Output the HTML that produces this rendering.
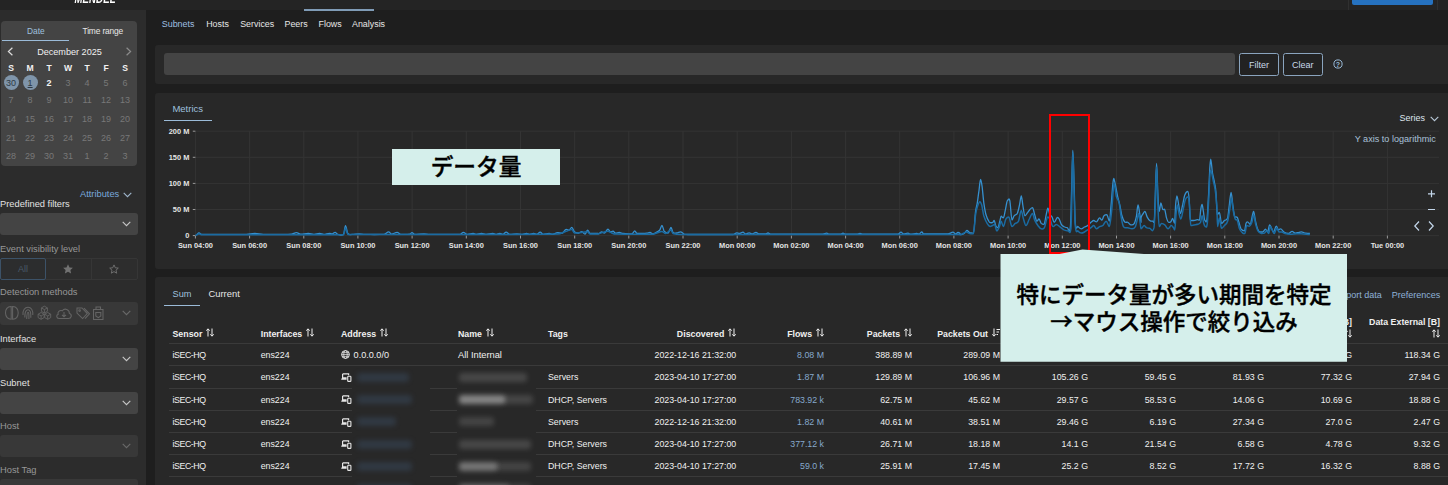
<!DOCTYPE html>
<html lang="ja"><head><meta charset="utf-8"><title>Subnets</title>
<style>
html,body{margin:0;padding:0;}
body{width:1448px;height:485px;overflow:hidden;position:relative;background:#1e1e1e;font-family:"Liberation Sans","Noto Sans CJK JP",sans-serif;font-size:9px;color:#e6e6e6;}
div,span,svg{position:absolute;box-sizing:border-box;}
.topbar{left:0;top:0;width:1448px;height:10px;background:#242424;}
.sidebar{left:0;top:10px;width:146px;height:475px;background:#2c2c2c;}
.panel{background:#282828;border-radius:3px;}
.cal{left:1px;top:20.5px;width:135.5px;height:145px;background:#444444;border-radius:4px;}
.cd{width:18px;height:14px;line-height:14px;text-align:center;font-size:9px;color:#787878;}
.cd.ch{color:#f2f2f2;font-weight:bold;font-size:8.6px;}
.cd.act{color:#f4f4f4;font-weight:bold;}
.cd.sel{color:#2e3a46;}
.cd.sel::before{content:"";position:absolute;left:1.5px;top:-0.5px;width:15px;height:15px;border-radius:50%;background:#7f95aa;z-index:-1;}
.cd.sel{z-index:1;}
.cd.today{text-decoration:underline;}
.lbl{left:0;white-space:nowrap;font-size:9.3px;line-height:12px;color:#e2e2e2;}
.lbl.dim{color:#979797;}
.sel-box{left:0;width:137.5px;height:21.5px;background:#444444;border-radius:3px;color:#c8c8c8;}
.sel-box.dim{background:#383838;color:#6a6a6a;}
.chev{position:absolute;}
.sel-box .chev{left:122px;top:7.6px;}
.nav span{top:17.6px;font-size:8.9px;line-height:12px;white-space:nowrap;color:#e6e6e6;}
.btn{top:53px;height:22.5px;border:1px solid #8aa4be;border-radius:2.5px;color:#c9d9ea;font-size:9px;line-height:22.6px;text-align:center;background:#222;}
.tab{font-size:9.2px;line-height:12px;white-space:nowrap;}
.axl text{font-family:"Liberation Sans",sans-serif;font-weight:bold;font-size:7.4px;fill:#e4e4e4;}
.th{white-space:nowrap;font-weight:bold;font-size:8.8px;line-height:12px;color:#f0f0f0;}
.td{white-space:nowrap;font-size:8.8px;line-height:14px;color:#f0f0f0;}
.td.fl{color:#86a9cc;}
.srt{position:relative;display:inline-block;vertical-align:-0.5px;margin-left:1.5px;}
.hr{left:168.5px;width:1280px;height:1px;background:#3a3a3a;}
.blur{filter:blur(2.9px);border-radius:3px;}
.cjk{position:static;font-family:"Noto Sans CJK JP",sans-serif;}
.note{background:#d5efeb;color:#000;font-weight:500;-webkit-text-stroke:0.4px #000;text-align:center;white-space:nowrap;font-family:"Liberation Sans","Noto Sans CJK JP",sans-serif;}
</style></head><body>
<div class="topbar"></div>
<span style="left:74.5px;top:-4.9px;font-size:9.6px;line-height:12px;font-weight:bold;font-style:italic;color:#fff;letter-spacing:0.1px;transform:scaleY(1.25);transform-origin:0 100%">MENDEL</span>
<div style="left:304px;top:9.4px;width:70px;height:1.7px;background:#7f9bb6"></div>
<div style="left:1348px;top:0;width:1px;height:10px;background:#303030"></div>
<div style="left:1437px;top:0;width:1px;height:10px;background:#303030"></div>
<div style="left:1352px;top:0;width:80.5px;height:4.8px;background:#2672c0;border-radius:0 0 2px 2px"></div>

<div class="sidebar"></div>
<div class="cal"></div>
<span class="tab" style="left:27px;top:24.6px;color:#9fc0df;font-size:8.4px">Date</span>
<span class="tab" style="left:82.5px;top:24.6px;color:#e8e8e8;font-size:8.4px;letter-spacing:-0.15px">Time range</span>
<div style="left:2px;top:39.8px;width:67px;height:1.2px;background:#9bbbd8"></div>
<svg style="left:7px;top:46.6px" width="7" height="9" viewBox="0 0 7 9"><path d="M5.4 0.7L1.4 4.5L5.4 8.3" fill="none" stroke="#dcdcdc" stroke-width="1.2"/></svg>
<svg style="left:124.5px;top:46.6px" width="7" height="9" viewBox="0 0 7 9"><path d="M1.6 0.7L5.6 4.5L1.6 8.3" fill="none" stroke="#8c8c8c" stroke-width="1.2"/></svg>
<span style="left:1.5px;top:45.5px;width:136px;text-align:center;font-size:9.1px;line-height:13px;color:#f0f0f0">December 2025</span>
<span class="cd ch" style="left:2.1px;top:60.9px">S</span>
<span class="cd ch" style="left:21.1px;top:60.9px">M</span>
<span class="cd ch" style="left:40.1px;top:60.9px">T</span>
<span class="cd ch" style="left:59.1px;top:60.9px">W</span>
<span class="cd ch" style="left:78.1px;top:60.9px">T</span>
<span class="cd ch" style="left:97.1px;top:60.9px">F</span>
<span class="cd ch" style="left:116.1px;top:60.9px">S</span>
<span class="cd sel" style="left:2.1px;top:75.7px">30</span>
<span class="cd sel today" style="left:21.1px;top:75.7px">1</span>
<span class="cd act" style="left:40.1px;top:75.7px">2</span>
<span class="cd" style="left:59.1px;top:75.7px">3</span>
<span class="cd" style="left:78.1px;top:75.7px">4</span>
<span class="cd" style="left:97.1px;top:75.7px">5</span>
<span class="cd" style="left:116.1px;top:75.7px">6</span>
<span class="cd" style="left:2.1px;top:93.3px">7</span>
<span class="cd" style="left:21.1px;top:93.3px">8</span>
<span class="cd" style="left:40.1px;top:93.3px">9</span>
<span class="cd" style="left:59.1px;top:93.3px">10</span>
<span class="cd" style="left:78.1px;top:93.3px">11</span>
<span class="cd" style="left:97.1px;top:93.3px">12</span>
<span class="cd" style="left:116.1px;top:93.3px">13</span>
<span class="cd" style="left:2.1px;top:112.0px">14</span>
<span class="cd" style="left:21.1px;top:112.0px">15</span>
<span class="cd" style="left:40.1px;top:112.0px">16</span>
<span class="cd" style="left:59.1px;top:112.0px">17</span>
<span class="cd" style="left:78.1px;top:112.0px">18</span>
<span class="cd" style="left:97.1px;top:112.0px">19</span>
<span class="cd" style="left:116.1px;top:112.0px">20</span>
<span class="cd" style="left:2.1px;top:130.6px">21</span>
<span class="cd" style="left:21.1px;top:130.6px">22</span>
<span class="cd" style="left:40.1px;top:130.6px">23</span>
<span class="cd" style="left:59.1px;top:130.6px">24</span>
<span class="cd" style="left:78.1px;top:130.6px">25</span>
<span class="cd" style="left:97.1px;top:130.6px">26</span>
<span class="cd" style="left:116.1px;top:130.6px">27</span>
<span class="cd" style="left:2.1px;top:149.0px">28</span>
<span class="cd" style="left:21.1px;top:149.0px">29</span>
<span class="cd" style="left:40.1px;top:149.0px">30</span>
<span class="cd" style="left:59.1px;top:149.0px">31</span>
<span class="cd" style="left:78.1px;top:149.0px">1</span>
<span class="cd" style="left:97.1px;top:149.0px">2</span>
<span class="cd" style="left:116.1px;top:149.0px">3</span>

<span class="tab" style="left:80px;top:188.2px;color:#79a9dc;font-size:9.3px">Attributes</span>
<svg class="chev" style="left:123px;top:191.5px;color:#9fb6cc" width="9" height="6" viewBox="0 0 9 6"><path d="M0.7 0.8L4.5 4.6L8.3 0.8" fill="none" stroke="currentColor" stroke-width="1.1"/></svg>
<span class="lbl" style="top:197.8px">Predefined filters</span>
<div class="sel-box" style="top:213px"><svg class="chev" width="9" height="6" viewBox="0 0 9 6"><path d="M0.7 0.8L4.5 4.6L8.3 0.8" fill="none" stroke="currentColor" stroke-width="1.1"/></svg></div>
<span class="lbl dim" style="top:243px">Event visibility level</span>
<div style="left:0;top:258px;width:137.5px;height:21.8px;background:#2d2d2d;border:1px solid #363636;border-radius:2px"></div>
<div style="left:0;top:258px;width:46px;height:21.8px;border:1px solid #3c5268;border-radius:2px;background:#2c2d2e"></div>
<div style="left:91px;top:258.5px;width:1px;height:20.8px;background:#363636"></div>
<span style="left:0;top:263.3px;width:46px;text-align:center;font-size:9px;line-height:12px;color:#4a5a6a">All</span>
<svg style="left:63.3px;top:264.3px" width="10" height="10" viewBox="0 0 10 10"><path d="M5 0.2L6.5 3.4L9.9 3.8L7.4 6.1L8.1 9.6L5 7.8L1.9 9.6L2.6 6.1L0.1 3.8L3.5 3.4Z" fill="#727272"/></svg>
<svg style="left:109.2px;top:264.3px" width="10" height="10" viewBox="0 0 10 10"><path d="M5 0.9L6.3 3.8L9.3 4.1L7 6.2L7.7 9.2L5 7.6L2.3 9.2L3 6.2L0.7 4.1L3.7 3.8Z" fill="none" stroke="#747474" stroke-width="0.9"/></svg>
<span class="lbl dim" style="top:286.3px">Detection methods</span>
<div class="sel-box dim" style="top:301.5px;height:23px"><svg class="chev" style="top:8.4px" width="9" height="6" viewBox="0 0 9 6"><path d="M0.7 0.8L4.5 4.6L8.3 0.8" fill="none" stroke="currentColor" stroke-width="1.1"/></svg></div>
<svg style="left:4px;top:305px" width="102" height="16" viewBox="0 0 102 16" fill="none" stroke="#646464" stroke-width="1.05">
<path d="M7.2 1.5C3.5 1.2 1.2 4.5 1.5 8C1.6 11.8 4 14.3 7.2 14.2ZM8.6 1.5C12.2 1.2 14.4 4.5 14.2 8C14 11.8 11.8 14.3 8.6 14.2Z"/>
<path d="M19 10C18.5 5 21 2.2 24 2.2C27 2.2 29.2 5 28.8 10M20.8 12.5C20.8 8 21.5 4.8 24 4.8C26.5 4.8 27 8 26.8 12.8M22.7 14C22.9 10 23 7.2 24 7.2C25 7.2 25 10 24.9 14"/>
<path d="M40.4 1.1999999999999997L43.4 2.8999999999999995V6.3L40.4 8.0L37.4 6.3V2.8999999999999995ZM37.4 2.8999999999999995L40.4 4.6L43.4 2.8999999999999995M40.4 4.6V8.0M37.1 7.5L40.1 9.200000000000001V12.6L37.1 14.3L34.1 12.6V9.200000000000001ZM34.1 9.200000000000001L37.1 10.9L40.1 9.200000000000001M37.1 10.9V14.3M43.7 7.5L46.7 9.200000000000001V12.6L43.7 14.3L40.7 12.6V9.200000000000001ZM40.7 9.200000000000001L43.7 10.9L46.7 9.200000000000001M43.7 10.9V14.3" stroke-width="0.9"/>
<path d="M55 13.5H64.5C67.5 13.5 68.5 9.5 65.3 8.2C65.6 4.5 60.5 2.6 58.4 5.8C55.5 4.8 53.2 7.2 54.2 9.3C52 10 52.3 13.4 55 13.5ZM60 7V11.6M58 9.8L60 11.8L62 9.8"/>
<path d="M73 3H78L83.3 8.6L78.6 13.5L73 8ZM80 3.2L85.5 8.8L81 13.6"/><circle cx="75.6" cy="5.6" r="0.8"/>
<path d="M89.5 4.5H99V14.5H89.5ZM92 4.5V2H96.5V4.5M91.8 7.5H96.8V11L94.3 12.6L91.8 11Z"/>
</svg>
<span class="lbl" style="top:333px">Interface</span>
<div class="sel-box" style="top:348.2px"><svg class="chev" width="9" height="6" viewBox="0 0 9 6"><path d="M0.7 0.8L4.5 4.6L8.3 0.8" fill="none" stroke="currentColor" stroke-width="1.1"/></svg></div>
<span class="lbl" style="top:376.7px">Subnet</span>
<div class="sel-box" style="top:392px"><svg class="chev" width="9" height="6" viewBox="0 0 9 6"><path d="M0.7 0.8L4.5 4.6L8.3 0.8" fill="none" stroke="currentColor" stroke-width="1.1"/></svg></div>
<span class="lbl dim" style="top:420.2px">Host</span>
<div class="sel-box dim" style="top:435.3px"><svg class="chev" width="9" height="6" viewBox="0 0 9 6"><path d="M0.7 0.8L4.5 4.6L8.3 0.8" fill="none" stroke="currentColor" stroke-width="1.1"/></svg></div>
<span class="lbl dim" style="top:463.8px">Host Tag</span>
<div class="sel-box dim" style="top:479px"><svg class="chev" width="9" height="6" viewBox="0 0 9 6"><path d="M0.7 0.8L4.5 4.6L8.3 0.8" fill="none" stroke="currentColor" stroke-width="1.1"/></svg></div>

<div class="nav">
<span style="left:161.8px;color:#9ebfe0">Subnets</span>
<span style="left:206.2px">Hosts</span>
<span style="left:240.2px">Services</span>
<span style="left:284.5px">Peers</span>
<span style="left:318.5px">Flows</span>
<span style="left:352px">Analysis</span>
</div>

<div class="panel" style="left:155px;top:45px;width:1300px;height:38.5px"></div>
<div style="left:164px;top:53px;width:1071px;height:21.5px;background:#444444;border-radius:3px"></div>
<div class="btn" style="left:1239.2px;width:39.8px">Filter</div>
<div class="btn" style="left:1283px;width:39.5px">Clear</div>
<svg style="left:1332.5px;top:59.4px" width="10" height="10" viewBox="0 0 10 10"><circle cx="5" cy="5" r="4.1" fill="none" stroke="#9bbbd8" stroke-width="1"/><text x="5" y="7.6" text-anchor="middle" font-family="Liberation Sans, sans-serif" font-size="7" font-weight="bold" fill="#9bbbd8">?</text></svg>

<div class="panel" style="left:155px;top:93px;width:1300px;height:176px"></div>
<span class="tab" style="left:172.4px;top:103px;color:#9fc0df;font-size:9.5px">Metrics</span>
<div style="left:164px;top:119.5px;width:47.7px;height:1.2px;background:#9bbbd8"></div>
<span class="tab" style="left:1399.5px;top:112px;color:#dfe6ee;font-size:9px">Series</span>
<svg class="chev" style="left:1430px;top:115.5px;color:#b9c9d9" width="9" height="6" viewBox="0 0 9 6"><path d="M0.7 0.8L4.5 4.6L8.3 0.8" fill="none" stroke="currentColor" stroke-width="1.1"/></svg>
<svg class="chart" width="1448" height="485" viewBox="0 0 1448 485">
<g stroke="#343434" stroke-width="1" fill="none"><line x1="195.4" y1="131" x2="195.4" y2="235.6"/><line x1="249.6" y1="131" x2="249.6" y2="235.6"/><line x1="303.8" y1="131" x2="303.8" y2="235.6"/><line x1="357.9" y1="131" x2="357.9" y2="235.6"/><line x1="412.1" y1="131" x2="412.1" y2="235.6"/><line x1="466.3" y1="131" x2="466.3" y2="235.6"/><line x1="520.5" y1="131" x2="520.5" y2="235.6"/><line x1="574.7" y1="131" x2="574.7" y2="235.6"/><line x1="628.8" y1="131" x2="628.8" y2="235.6"/><line x1="683.0" y1="131" x2="683.0" y2="235.6"/><line x1="737.2" y1="131" x2="737.2" y2="235.6"/><line x1="791.4" y1="131" x2="791.4" y2="235.6"/><line x1="845.6" y1="131" x2="845.6" y2="235.6"/><line x1="899.7" y1="131" x2="899.7" y2="235.6"/><line x1="953.9" y1="131" x2="953.9" y2="235.6"/><line x1="1008.1" y1="131" x2="1008.1" y2="235.6"/><line x1="1062.3" y1="131" x2="1062.3" y2="235.6"/><line x1="1116.5" y1="131" x2="1116.5" y2="235.6"/><line x1="1170.6" y1="131" x2="1170.6" y2="235.6"/><line x1="1224.8" y1="131" x2="1224.8" y2="235.6"/><line x1="1279.0" y1="131" x2="1279.0" y2="235.6"/><line x1="1333.2" y1="131" x2="1333.2" y2="235.6"/><line x1="1387.4" y1="131" x2="1387.4" y2="235.6"/><line x1="195.4" y1="235.6" x2="1439" y2="235.6"/><line x1="195.4" y1="209.5" x2="1439" y2="209.5"/><line x1="195.4" y1="183.4" x2="1439" y2="183.4"/><line x1="195.4" y1="157.3" x2="1439" y2="157.3"/><line x1="195.4" y1="131.2" x2="1439" y2="131.2"/></g>
<g stroke="#9a9a9a" stroke-width="1" fill="none"><line x1="195.4" y1="235.6" x2="195.4" y2="238.5"/><line x1="249.6" y1="235.6" x2="249.6" y2="238.5"/><line x1="303.8" y1="235.6" x2="303.8" y2="238.5"/><line x1="357.9" y1="235.6" x2="357.9" y2="238.5"/><line x1="412.1" y1="235.6" x2="412.1" y2="238.5"/><line x1="466.3" y1="235.6" x2="466.3" y2="238.5"/><line x1="520.5" y1="235.6" x2="520.5" y2="238.5"/><line x1="574.7" y1="235.6" x2="574.7" y2="238.5"/><line x1="628.8" y1="235.6" x2="628.8" y2="238.5"/><line x1="683.0" y1="235.6" x2="683.0" y2="238.5"/><line x1="737.2" y1="235.6" x2="737.2" y2="238.5"/><line x1="791.4" y1="235.6" x2="791.4" y2="238.5"/><line x1="845.6" y1="235.6" x2="845.6" y2="238.5"/><line x1="899.7" y1="235.6" x2="899.7" y2="238.5"/><line x1="953.9" y1="235.6" x2="953.9" y2="238.5"/><line x1="1008.1" y1="235.6" x2="1008.1" y2="238.5"/><line x1="1062.3" y1="235.6" x2="1062.3" y2="238.5"/><line x1="1116.5" y1="235.6" x2="1116.5" y2="238.5"/><line x1="1170.6" y1="235.6" x2="1170.6" y2="238.5"/><line x1="1224.8" y1="235.6" x2="1224.8" y2="238.5"/><line x1="1279.0" y1="235.6" x2="1279.0" y2="238.5"/><line x1="1333.2" y1="235.6" x2="1333.2" y2="238.5"/><line x1="1387.4" y1="235.6" x2="1387.4" y2="238.5"/><line x1="192.8" y1="235.6" x2="195.4" y2="235.6"/><line x1="192.8" y1="209.5" x2="195.4" y2="209.5"/><line x1="192.8" y1="183.4" x2="195.4" y2="183.4"/><line x1="192.8" y1="157.3" x2="195.4" y2="157.3"/><line x1="192.8" y1="131.2" x2="195.4" y2="131.2"/></g>
<g class="axl"><text x="195.4" y="247.9" text-anchor="middle">Sun 04:00</text><text x="249.6" y="247.9" text-anchor="middle">Sun 06:00</text><text x="303.8" y="247.9" text-anchor="middle">Sun 08:00</text><text x="357.9" y="247.9" text-anchor="middle">Sun 10:00</text><text x="412.1" y="247.9" text-anchor="middle">Sun 12:00</text><text x="466.3" y="247.9" text-anchor="middle">Sun 14:00</text><text x="520.5" y="247.9" text-anchor="middle">Sun 16:00</text><text x="574.7" y="247.9" text-anchor="middle">Sun 18:00</text><text x="628.8" y="247.9" text-anchor="middle">Sun 20:00</text><text x="683.0" y="247.9" text-anchor="middle">Sun 22:00</text><text x="737.2" y="247.9" text-anchor="middle">Mon 00:00</text><text x="791.4" y="247.9" text-anchor="middle">Mon 02:00</text><text x="845.6" y="247.9" text-anchor="middle">Mon 04:00</text><text x="899.7" y="247.9" text-anchor="middle">Mon 06:00</text><text x="953.9" y="247.9" text-anchor="middle">Mon 08:00</text><text x="1008.1" y="247.9" text-anchor="middle">Mon 10:00</text><text x="1062.3" y="247.9" text-anchor="middle">Mon 12:00</text><text x="1116.5" y="247.9" text-anchor="middle">Mon 14:00</text><text x="1170.6" y="247.9" text-anchor="middle">Mon 16:00</text><text x="1224.8" y="247.9" text-anchor="middle">Mon 18:00</text><text x="1279.0" y="247.9" text-anchor="middle">Mon 20:00</text><text x="1333.2" y="247.9" text-anchor="middle">Mon 22:00</text><text x="1387.4" y="247.9" text-anchor="middle">Tue 00:00</text><text x="189.3" y="238.3" text-anchor="end">0</text><text x="189.3" y="212.2" text-anchor="end">50 M</text><text x="189.3" y="186.1" text-anchor="end">100 M</text><text x="189.3" y="160.0" text-anchor="end">150 M</text><text x="189.3" y="133.9" text-anchor="end">200 M</text></g>
<path d="M195.6,235.2C196.8,235.2 197.8,233.0 199.0,233.0C200.0,233.0 200.8,234.4 201.8,234.4C217.4,234.4 230.8,234.4 246.4,234.4C249.3,234.4 251.8,233.5 254.8,233.5C257.8,233.5 260.3,234.4 263.3,234.4C273.1,234.4 281.6,234.6 291.4,234.1C293.2,234.0 294.7,232.7 296.5,232.7C297.9,232.7 299.1,234.1 300.5,234.1C303.2,234.1 305.6,233.5 308.3,233.5C310.3,233.5 312.0,234.4 314.0,234.4C316.0,234.4 317.6,233.5 319.6,233.5C321.1,233.5 322.4,234.4 323.8,234.4C325.8,234.4 327.5,233.3 329.5,233.3C330.5,233.3 331.3,233.8 332.3,233.8C333.3,233.8 334.1,232.4 335.1,232.4C336.1,232.4 336.9,234.4 337.9,234.4C339.9,234.4 341.6,236.4 343.6,234.1C344.3,233.3 344.8,225.6 345.5,225.6C346.3,225.6 347.0,232.5 347.8,233.5C349.3,235.5 350.5,234.4 352.0,234.4C354.5,234.4 356.6,233.8 359.1,233.8C361.0,233.8 362.7,234.4 364.7,234.4C371.6,234.4 377.5,234.8 384.4,234.1C385.9,233.9 387.2,231.8 388.6,231.8C389.6,231.8 390.5,234.1 391.5,234.1C393.4,234.1 395.1,232.4 397.1,232.4C398.6,232.4 399.8,234.4 401.3,234.4C404.3,234.4 406.8,234.6 409.8,234.1C410.6,234.0 411.2,232.7 412.0,232.7C412.9,232.7 413.7,234.4 414.6,234.4C417.8,234.4 420.6,233.8 423.9,233.8C425.8,233.8 427.5,234.4 429.5,234.4C440.4,234.4 449.6,234.7 460.5,234.1C461.5,234.0 462.3,232.4 463.3,232.4C464.8,232.4 466.1,234.4 467.5,234.4C469.5,234.4 471.2,233.5 473.2,233.5C474.2,233.5 475.0,234.4 476.0,234.4C478.0,234.4 479.7,233.5 481.6,233.5C483.1,233.5 484.4,234.4 485.9,234.4C488.3,234.4 490.4,233.5 492.9,233.5C493.9,233.5 494.7,234.4 495.7,234.4C497.2,234.4 498.5,233.3 499.9,233.3C500.9,233.3 501.8,234.4 502.8,234.4C503.9,234.4 505.0,232.1 506.1,232.1C507.4,232.1 508.5,234.4 509.8,234.4C512.3,234.4 514.4,233.8 516.9,233.8C518.8,233.8 520.5,234.4 522.5,234.4C524.0,234.4 525.2,233.5 526.7,233.5C527.7,233.5 528.5,234.4 529.5,234.4C531.0,234.4 532.3,233.5 533.8,233.5C534.7,233.5 535.6,234.4 536.6,234.4C537.9,234.4 539.0,232.1 540.2,232.1C541.2,232.1 542.1,234.4 543.1,234.4C545.2,234.4 547.1,233.5 549.3,233.5C550.2,233.5 551.1,234.4 552.1,234.4C554.0,234.4 555.7,232.7 557.7,232.7C559.2,232.7 560.5,233.3 561.9,233.3C563.4,233.3 564.7,229.3 566.2,229.3C567.1,229.3 568.0,230.2 569.0,230.2C570.0,230.2 570.8,227.3 571.8,227.3C572.8,227.3 573.6,231.3 574.6,232.1C576.1,233.3 577.4,233.0 578.8,233.0C579.8,233.0 580.7,231.6 581.7,231.6C582.8,231.6 583.9,234.1 585.0,234.1C585.9,234.1 586.7,230.2 587.6,230.2C588.5,230.2 589.2,233.5 590.1,233.5C592.9,233.5 595.2,233.5 598.0,233.5C598.0,233.5 598.0,233.8 598.0,233.8C599.3,233.8 600.4,232.0 601.8,232.0C602.6,232.0 603.4,233.0 604.2,233.0C605.6,233.0 606.7,229.2 608.0,229.2C608.9,229.2 609.6,232.0 610.5,232.0C611.4,232.0 612.1,231.2 613.0,231.2C613.9,231.2 614.6,233.2 615.5,233.2C616.8,233.2 617.9,232.5 619.2,232.5C620.6,232.5 621.7,233.3 623.0,233.5C625.2,233.8 627.1,233.8 629.2,233.8C630.4,233.8 631.4,234.1 632.5,233.5C633.3,233.1 634.0,230.8 634.8,230.8C635.5,230.8 636.2,233.5 637.0,233.5C639.1,233.5 640.9,233.5 643.0,233.5C644.3,233.5 645.4,233.4 646.8,233.2C647.9,233.1 648.9,232.5 650.0,232.5C651.0,232.5 652.0,234.0 653.0,234.0C654.3,234.0 655.4,232.8 656.8,232.0C657.8,231.4 658.7,231.3 659.8,230.0C660.5,229.0 661.2,225.5 662.0,225.5C662.8,225.5 663.5,230.3 664.2,231.2C665.6,232.9 666.7,233.0 668.0,233.0C668.4,233.0 668.8,232.1 669.2,231.2C669.9,230.1 670.4,227.5 671.0,227.5C671.7,227.5 672.3,231.8 673.0,232.5C674.3,233.8 675.4,233.0 676.8,233.0C678.1,233.0 679.2,231.8 680.5,231.8C681.8,231.8 682.9,233.5 684.2,234.0C685.6,234.5 686.7,234.5 688.0,234.5C703.8,234.5 717.2,234.5 733.0,234.5C734.3,234.5 735.4,232.8 736.8,232.8C737.6,232.8 738.4,233.5 739.2,233.5C740.6,233.5 741.7,232.2 743.0,232.2C743.9,232.2 744.6,234.0 745.5,234.0C746.8,234.0 747.9,232.8 749.2,232.8C750.1,232.8 750.9,234.0 751.8,234.0C753.2,234.0 754.5,232.5 756.0,232.5C757.1,232.5 758.1,234.0 759.2,234.0C761.4,234.0 763.3,234.0 765.5,234.0C766.4,234.0 767.1,233.0 768.0,233.0C768.9,233.0 769.6,234.2 770.5,234.2C788.9,234.2 804.6,234.2 823.0,234.2C824.3,234.2 825.4,233.2 826.8,233.2C827.6,233.2 828.4,234.2 829.2,234.2C833.2,234.2 836.6,234.2 840.5,234.2C841.4,234.2 842.1,233.2 843.0,233.2C843.9,233.2 844.6,234.2 845.5,234.2C849.4,234.2 852.8,234.2 856.8,234.2C857.9,234.2 858.9,233.5 860.0,233.5C861.0,233.5 862.0,234.2 863.0,234.2C875.2,234.2 885.8,234.2 898.0,234.2C899.0,234.2 900.0,232.2 901.0,232.2C901.9,232.2 902.6,234.0 903.5,234.0C905.1,234.0 906.4,233.2 908.0,233.2C908.9,233.2 909.6,234.2 910.5,234.2C912.7,234.2 914.6,233.5 916.8,233.5C917.6,233.5 918.4,234.0 919.2,234.0C920.1,234.0 920.9,231.8 921.8,231.8C922.4,231.8 922.9,234.0 923.5,234.0C932.1,234.0 939.4,234.0 948.0,234.0C949.8,234.0 951.2,232.2 953.0,232.2C953.9,232.2 954.6,233.8 955.5,233.8C956.4,233.8 957.1,232.5 958.0,232.5C958.7,232.5 959.3,232.8 960.0,233.5C960.0,233.5 960.0,234.6 960.0,234.6C961.5,234.6 962.8,234.4 964.3,233.5C965.2,233.0 966.0,230.5 966.9,230.5C967.9,230.5 968.8,232.3 969.7,232.7C971.0,233.2 972.1,233.1 973.4,233.1C974.2,233.1 974.8,217.3 975.6,211.4C976.2,206.7 976.7,206.6 977.3,202.8C977.9,199.0 978.4,194.2 979.1,189.8C979.6,186.0 980.0,179.4 980.6,179.4C981.1,179.4 981.6,182.7 982.1,186.5C982.7,190.9 983.2,198.4 983.8,202.8C984.6,208.3 985.2,212.0 986.0,214.7C987.1,218.7 988.1,220.4 989.2,221.8C990.4,223.2 991.3,222.7 992.5,222.7C993.1,222.7 993.6,220.5 994.2,220.5C994.7,220.5 995.2,224.5 995.7,225.5C996.5,227.0 997.1,227.7 997.9,227.7C998.6,227.7 999.3,222.8 1000.1,220.1C1000.4,218.8 1000.8,216.2 1001.1,216.2C1001.9,216.2 1002.5,217.9 1003.3,217.9C1004.1,217.9 1004.7,212.4 1005.5,209.3C1006.2,206.2 1006.9,200.2 1007.6,200.2C1008.4,200.2 1009.0,197.1 1009.8,200.6C1010.6,204.1 1011.2,220.1 1012.0,220.1C1012.7,220.1 1013.4,216.7 1014.1,215.8C1015.3,214.3 1016.2,215.5 1017.4,213.2C1018.1,211.7 1018.8,208.3 1019.5,205.0C1020.1,202.3 1020.7,195.9 1021.3,195.9C1021.8,195.9 1022.3,202.1 1022.8,205.0C1023.5,209.1 1024.2,215.8 1025.0,215.8C1025.9,215.8 1026.6,213.7 1027.6,212.5C1028.3,211.6 1029.0,210.5 1029.7,209.7C1030.7,208.7 1031.5,207.6 1032.5,207.6C1033.3,207.6 1033.9,212.3 1034.7,214.7C1035.5,217.1 1036.1,221.2 1036.9,221.2C1037.6,221.2 1038.3,219.0 1039.0,219.0C1039.8,219.0 1040.4,222.5 1041.2,223.4C1042.2,224.4 1043.0,224.4 1044.0,224.4C1044.8,224.4 1045.4,217.9 1046.2,214.7C1046.8,212.2 1047.3,208.2 1047.9,208.2C1048.6,208.2 1049.2,213.3 1049.9,214.7C1050.6,216.3 1051.3,215.5 1052.0,216.9C1052.8,218.2 1053.4,222.3 1054.2,222.3C1055.3,222.3 1056.3,217.5 1057.4,217.5C1058.0,217.5 1058.6,217.9 1059.2,219.0C1059.9,220.4 1060.6,223.2 1061.3,224.4C1062.2,225.9 1063.0,226.1 1063.9,226.6C1065.1,227.2 1066.0,227.7 1067.2,227.7C1068.3,227.7 1069.3,235.4 1070.4,226.6C1070.8,223.7 1071.1,206.3 1071.5,194.1C1072.0,179.6 1072.3,150.4 1072.8,150.4C1073.3,150.4 1073.6,169.6 1074.1,183.3C1074.5,194.7 1074.8,218.1 1075.2,222.3C1076.2,233.2 1077.0,225.5 1078.0,226.6C1079.1,227.8 1080.1,228.8 1081.2,228.8C1082.4,228.8 1083.4,227.6 1084.5,227.0C1085.6,226.5 1086.6,226.4 1087.7,225.5C1088.9,224.7 1089.9,223.2 1091.0,222.3C1092.0,221.5 1092.8,220.5 1093.8,220.5C1094.7,220.5 1095.5,221.8 1096.4,221.8C1097.5,221.8 1098.5,217.9 1099.6,217.9C1100.4,217.9 1101.1,220.1 1101.8,220.1C1102.6,220.1 1103.2,216.6 1104.0,215.8C1105.0,214.7 1105.8,214.7 1106.8,214.7C1107.7,214.7 1108.5,221.2 1109.4,221.2C1110.0,221.2 1110.5,211.4 1111.1,205.0C1111.7,199.3 1112.1,191.9 1112.6,186.5C1113.0,182.7 1113.3,178.5 1113.7,178.5C1114.3,178.5 1114.8,182.7 1115.5,185.5C1116.2,188.9 1116.9,192.9 1117.6,196.3C1118.4,199.7 1119.0,201.5 1119.8,205.0C1120.5,208.4 1121.2,213.1 1121.9,215.8C1122.9,219.0 1123.6,220.8 1124.5,221.8C1125.7,223.1 1126.7,221.7 1127.8,222.3C1128.9,222.8 1129.9,224.9 1131.0,224.9C1132.2,224.9 1133.2,225.3 1134.3,223.4C1135.0,222.1 1135.7,219.6 1136.5,215.8C1137.0,213.1 1137.4,205.0 1138.0,205.0C1138.6,205.0 1139.1,210.1 1139.7,213.6C1140.2,216.2 1140.5,222.3 1141.0,222.3C1141.0,222.3 1141.0,217.9 1141.0,217.9C1141.8,214.9 1142.4,214.9 1143.2,213.6C1143.8,212.6 1144.3,211.4 1144.9,211.4C1145.7,211.4 1146.3,215.4 1147.1,216.9C1148.0,218.6 1148.8,219.9 1149.7,220.5C1150.8,221.4 1151.8,221.2 1152.9,221.2C1153.4,221.2 1153.9,225.1 1154.4,219.0C1154.7,215.6 1155.0,201.9 1155.3,194.1C1155.7,182.4 1156.1,163.4 1156.6,163.4C1157.0,163.4 1157.4,185.7 1157.9,194.1C1158.3,202.5 1158.7,211.4 1159.2,211.4C1159.8,211.4 1160.3,202.8 1160.9,202.8C1161.5,202.8 1162.0,208.2 1162.7,209.3C1163.4,210.6 1164.1,208.0 1164.8,209.7C1165.4,211.1 1165.9,216.0 1166.5,217.9C1167.3,220.4 1168.0,222.3 1168.7,222.3C1169.5,222.3 1170.1,222.6 1170.9,221.8C1171.5,221.2 1172.0,218.4 1172.6,218.4C1173.3,218.4 1173.9,223.4 1174.6,223.4C1174.9,223.4 1175.3,209.3 1175.6,205.0C1176.1,199.7 1176.5,195.9 1176.9,195.9C1177.5,195.9 1178.1,201.8 1178.7,205.0C1179.3,208.1 1179.8,213.6 1180.4,213.6C1181.2,213.6 1181.8,208.2 1182.6,205.0C1183.3,201.7 1184.0,197.2 1184.7,195.2C1185.8,192.5 1186.7,191.5 1187.8,191.5C1188.2,191.5 1188.6,193.4 1189.1,198.5C1189.5,203.5 1189.9,220.5 1190.4,220.5C1191.7,220.5 1192.8,220.5 1194.0,220.5C1195.2,220.5 1196.2,219.7 1197.3,219.7C1198.0,219.7 1198.7,220.1 1199.5,220.1C1199.9,220.1 1200.3,212.0 1200.8,209.3C1201.2,206.6 1201.6,204.5 1202.1,204.5C1202.5,204.5 1202.9,208.9 1203.4,211.4C1203.9,214.5 1204.3,220.5 1204.9,220.5C1205.6,220.5 1206.3,224.5 1207.0,219.0C1207.6,215.2 1208.0,203.7 1208.6,194.1C1209.0,185.9 1209.4,175.5 1209.8,168.1C1210.2,163.2 1210.4,159.1 1210.7,159.1C1211.3,159.1 1211.8,168.7 1212.4,172.5C1213.2,177.2 1213.9,179.0 1214.6,183.3C1215.1,185.9 1215.5,186.5 1215.9,192.0C1216.4,197.5 1216.8,214.7 1217.2,214.7C1218.0,214.7 1218.6,212.5 1219.4,212.5C1220.1,212.5 1220.8,223.4 1221.5,223.4C1222.5,223.4 1223.4,221.4 1224.4,220.5C1225.5,219.5 1226.5,221.5 1227.6,217.9C1228.2,216.0 1228.7,209.4 1229.3,205.0C1229.9,200.5 1230.5,192.4 1231.1,192.4C1231.7,192.4 1232.2,200.9 1232.8,205.0C1233.4,209.0 1233.9,214.1 1234.5,215.8C1235.5,218.5 1236.4,216.0 1237.3,217.5C1237.9,218.3 1238.3,220.7 1238.9,222.3C1239.6,224.6 1240.3,227.6 1241.0,228.8C1242.2,230.6 1243.3,230.9 1244.5,230.9C1245.0,230.9 1245.5,224.9 1246.0,223.4C1246.5,221.8 1247.0,221.8 1247.5,221.8C1248.5,221.8 1249.4,224.4 1250.3,224.4C1250.9,224.4 1251.3,220.1 1251.9,217.9C1252.5,215.5 1253.0,211.4 1253.6,211.4C1254.2,211.4 1254.7,217.4 1255.3,220.1C1256.1,223.5 1256.7,226.9 1257.5,228.8C1258.4,231.0 1259.2,232.0 1260.1,232.0C1261.0,232.0 1261.8,232.0 1262.7,232.0C1263.7,232.0 1264.5,229.2 1265.5,229.2C1266.2,229.2 1266.9,232.0 1267.7,232.0C1268.3,232.0 1268.9,224.9 1269.6,224.9C1270.2,224.9 1270.7,226.6 1271.3,227.7C1272.1,229.1 1272.7,232.0 1273.5,232.0C1274.5,232.0 1275.3,226.2 1276.3,226.2C1277.1,226.2 1277.7,229.9 1278.5,229.9C1279.2,229.9 1279.9,228.8 1280.6,228.8C1281.8,228.8 1282.8,231.3 1283.9,232.0C1285.4,233.0 1286.7,233.5 1288.2,233.5C1289.6,233.5 1290.8,231.4 1292.1,231.4C1293.2,231.4 1294.1,233.1 1295.2,233.1C1296.1,233.1 1297.0,232.9 1298.0,232.7C1299.1,232.4 1300.1,231.8 1301.2,231.8C1302.7,231.8 1304.0,232.8 1305.5,233.1C1307.1,233.4 1308.4,233.5 1309.9,233.5" fill="none" stroke="#3590cf" stroke-width="1.3" stroke-linejoin="round"/>
<path d="M195.6,235.2C196.8,235.2 197.8,233.8 199.0,233.8C200.0,233.8 200.8,234.7 201.8,234.7C251.4,234.7 294.0,234.7 343.6,234.7C344.3,234.7 344.8,227.9 345.5,227.9C346.3,227.9 347.0,234.4 347.8,234.4C421.3,234.4 484.2,235.1 557.7,234.1C560.7,234.1 563.2,232.2 566.2,231.3C568.1,230.7 569.8,229.6 571.8,229.6C572.8,229.6 573.6,233.0 574.6,233.0C579.1,233.0 583.0,231.8 587.6,231.8C588.5,231.8 589.2,234.1 590.1,234.1C592.9,234.1 595.2,234.1 598.0,234.1C598.0,234.1 598.0,234.0 598.0,234.0C601.5,233.0 604.5,231.2 608.0,231.2C609.3,231.2 610.4,232.5 611.8,233.0C613.1,233.5 614.2,234.0 615.5,234.0C628.6,234.4 639.9,234.2 653.0,234.2C654.3,234.2 655.4,233.4 656.8,233.0C658.6,232.4 660.2,231.5 662.0,231.5C663.2,231.5 664.3,233.5 665.5,233.5C667.4,233.5 669.1,230.0 671.0,230.0C671.7,230.0 672.3,233.3 673.0,233.5C676.9,234.8 680.3,234.5 684.2,234.5C780.8,234.5 863.5,234.5 960.0,234.5C960.0,234.5 960.0,234.8 960.0,234.8C962.3,234.8 964.2,232.0 966.5,232.0C967.6,232.0 968.6,233.2 969.7,233.5C971.0,233.9 972.1,233.7 973.4,233.7C974.2,233.7 974.8,219.9 975.6,214.7C976.2,210.6 976.7,208.9 977.3,207.1C978.2,204.4 979.0,201.7 979.9,201.7C980.5,201.7 981.0,202.8 981.7,205.0C982.4,207.7 983.1,213.2 983.8,215.8C985.0,219.6 985.9,221.5 987.1,223.4C988.2,225.2 989.2,226.6 990.3,226.6C991.1,226.6 991.7,225.9 992.5,225.5C993.2,225.1 993.9,224.4 994.6,224.4C995.4,224.4 996.0,230.9 996.8,230.9C997.7,230.9 998.5,228.6 999.4,226.6C1000.0,225.2 1000.5,221.2 1001.1,221.2C1001.9,221.2 1002.5,226.6 1003.3,226.6C1004.2,226.6 1005.0,220.7 1005.9,219.0C1006.9,217.3 1007.7,216.9 1008.7,216.9C1009.9,216.9 1010.8,226.6 1012.0,226.6C1013.1,226.6 1014.1,224.3 1015.2,223.4C1016.3,222.4 1017.3,223.6 1018.5,221.2C1019.4,219.1 1020.3,210.4 1021.3,210.4C1022.0,210.4 1022.5,215.8 1023.2,217.9C1024.2,221.1 1025.0,225.5 1026.0,225.5C1027.2,225.5 1028.1,221.1 1029.3,219.0C1030.4,216.9 1031.4,213.6 1032.5,213.6C1033.3,213.6 1033.9,218.4 1034.7,220.1C1035.8,222.6 1036.8,224.0 1037.9,225.5C1039.1,227.0 1040.1,228.8 1041.2,228.8C1042.3,228.8 1043.3,229.8 1044.4,227.7C1045.6,225.6 1046.5,216.9 1047.7,216.9C1048.4,216.9 1049.1,217.7 1049.9,219.0C1051.0,221.1 1052.0,226.6 1053.1,226.6C1054.2,226.6 1055.2,224.4 1056.3,224.4C1057.5,224.4 1058.5,225.8 1059.6,226.6C1061.1,227.7 1062.4,229.1 1063.9,229.9C1065.4,230.6 1066.7,230.9 1068.3,230.9C1069.2,230.9 1069.9,235.6 1070.9,228.8C1071.2,226.5 1071.4,216.7 1071.7,205.0C1072.1,190.2 1072.4,153.0 1072.8,153.0C1073.3,153.0 1073.6,181.2 1074.1,194.1C1074.6,207.0 1074.9,222.3 1075.4,226.6C1076.3,235.2 1077.1,229.9 1078.0,230.9C1079.1,232.2 1080.1,233.1 1081.2,233.1C1082.4,233.1 1083.4,232.6 1084.5,232.0C1085.6,231.4 1086.6,230.6 1087.7,229.9C1088.9,229.1 1089.9,228.5 1091.0,227.7C1092.0,227.0 1092.8,225.5 1093.8,225.5C1094.7,225.5 1095.5,228.8 1096.4,228.8C1097.5,228.8 1098.5,227.2 1099.6,226.6C1100.8,226.0 1101.8,226.5 1102.9,225.5C1104.0,224.6 1105.0,221.2 1106.1,221.2C1107.3,221.2 1108.3,226.6 1109.4,226.6C1110.1,226.6 1110.8,218.6 1111.6,211.4C1112.2,205.7 1112.7,196.4 1113.3,189.8C1113.6,186.5 1113.8,183.3 1114.2,183.3C1114.9,183.3 1115.6,193.3 1116.3,196.3C1117.3,200.1 1118.1,198.5 1119.1,202.8C1119.9,206.1 1120.5,213.8 1121.3,217.9C1122.1,222.1 1122.7,225.5 1123.5,226.6C1125.0,228.9 1126.3,227.3 1127.8,227.7C1129.3,228.1 1130.6,228.8 1132.1,228.8C1133.3,228.8 1134.2,228.6 1135.4,226.6C1136.0,225.5 1136.5,222.5 1137.1,220.1C1137.6,218.0 1138.1,213.6 1138.6,213.6C1139.1,213.6 1139.6,218.9 1140.1,222.3C1140.4,224.2 1140.7,228.8 1141.0,228.8C1142.1,228.8 1143.1,225.5 1144.2,225.5C1145.0,225.5 1145.7,227.3 1146.4,227.7C1147.5,228.3 1148.5,228.3 1149.7,228.3C1151.2,228.3 1152.5,234.0 1154.0,227.7C1154.4,225.8 1154.8,215.6 1155.3,205.0C1155.7,194.3 1156.1,167.1 1156.6,167.1C1157.0,167.1 1157.4,194.5 1157.9,205.0C1158.3,215.4 1158.7,226.6 1159.2,226.6C1160.0,226.6 1160.7,223.4 1161.6,223.4C1162.7,223.4 1163.7,223.9 1164.8,224.9C1166.0,225.8 1166.9,228.8 1168.1,228.8C1169.2,228.8 1170.2,225.5 1171.3,225.5C1172.1,225.5 1172.7,226.7 1173.5,227.7C1173.9,228.3 1174.3,229.9 1174.8,229.9C1175.2,229.9 1175.6,218.0 1176.1,213.6C1176.5,209.3 1176.9,205.0 1177.4,205.0C1178.0,205.0 1178.5,211.1 1179.1,213.6C1179.7,216.1 1180.2,219.0 1180.8,219.0C1181.7,219.0 1182.4,212.9 1183.2,209.3C1184.0,206.0 1184.6,201.5 1185.4,199.5C1186.4,197.1 1187.2,196.7 1188.2,196.7C1188.7,196.7 1189.0,199.9 1189.5,205.0C1190.0,210.0 1190.3,225.5 1190.8,225.5C1191.9,225.5 1192.9,225.1 1194.0,224.9C1195.6,224.6 1196.9,224.6 1198.4,224.0C1199.1,223.7 1199.8,224.0 1200.5,222.3C1201.1,221.1 1201.5,215.8 1202.1,215.8C1202.7,215.8 1203.2,221.5 1203.8,223.4C1204.4,225.2 1204.9,226.6 1205.5,226.6C1206.1,226.6 1206.6,228.6 1207.3,223.4C1207.8,218.8 1208.2,207.7 1208.8,198.5C1209.3,189.2 1209.8,170.3 1210.3,170.3C1210.7,170.3 1211.1,170.9 1211.6,172.5C1212.2,174.6 1212.7,178.3 1213.3,181.1C1213.9,184.0 1214.4,184.5 1215.0,188.7C1215.7,192.9 1216.2,196.1 1216.8,205.0C1217.1,209.4 1217.3,226.6 1217.6,226.6C1218.2,226.6 1218.8,217.9 1219.4,217.9C1220.1,217.9 1220.8,228.3 1221.5,228.3C1222.5,228.3 1223.4,226.7 1224.4,225.5C1225.5,224.2 1226.5,224.6 1227.6,221.2C1228.4,218.9 1229.0,213.7 1229.8,209.3C1230.4,205.7 1230.9,198.5 1231.5,198.5C1232.1,198.5 1232.6,207.0 1233.2,210.4C1233.9,214.2 1234.5,217.3 1235.2,219.0C1235.9,220.9 1236.6,218.8 1237.3,220.5C1238.1,222.2 1238.8,227.0 1239.5,228.8C1240.6,231.4 1241.6,232.1 1242.8,233.1C1243.5,233.8 1244.2,233.5 1244.9,233.5C1245.5,233.5 1246.0,225.5 1246.7,225.5C1247.6,225.5 1248.3,226.2 1249.3,226.2C1250.2,226.2 1250.9,224.7 1251.9,222.3C1252.5,220.7 1253.0,214.7 1253.6,214.7C1254.3,214.7 1255.0,221.6 1255.7,224.4C1256.5,227.3 1257.2,229.7 1257.9,230.9C1259.1,232.8 1260.0,233.5 1261.2,233.5C1262.3,233.5 1263.3,233.6 1264.4,233.1C1265.2,232.7 1265.8,230.9 1266.6,230.9C1267.3,230.9 1268.0,233.5 1268.7,233.5C1269.3,233.5 1269.7,226.6 1270.3,226.6C1270.9,226.6 1271.5,228.6 1272.2,229.9C1272.9,231.1 1273.5,233.5 1274.2,233.5C1275.1,233.5 1275.8,228.3 1276.8,228.3C1277.6,228.3 1278.3,232.0 1279.1,232.0C1280.0,232.0 1280.8,232.0 1281.7,232.0C1282.9,232.0 1283.8,233.2 1285.0,233.5C1286.9,234.0 1288.5,234.2 1290.4,234.2C1292.7,234.2 1294.6,233.7 1296.9,233.7C1299.2,233.7 1301.1,233.9 1303.4,234.0C1305.7,234.1 1307.6,234.4 1309.9,234.4" fill="none" stroke="#1a6ba2" stroke-width="1.5" stroke-linejoin="round"/>
</svg>
<span class="tab" style="left:1354.7px;top:133px;color:#a9c1d9;font-size:9.1px">Y axis to logarithmic</span>
<svg style="left:1410px;top:186px" width="30" height="48" viewBox="0 0 30 48" fill="none" stroke="#c3d6ea" stroke-width="1.2"><path d="M18 7.8H25M21.5 4.3V11.3M18 23.5H25M9 35.5L4.8 40L9 44.5M19 35.5L23.2 40L19 44.5"/></svg>

<div class="panel" style="left:155px;top:277px;width:1300px;height:220px"></div>
<span class="tab" style="left:172.5px;top:287.7px;color:#9fc0df">Sum</span>
<span class="tab" style="left:208.5px;top:287.7px;color:#e6e6e6;font-size:9.4px">Current</span>
<div style="left:164px;top:304.5px;width:35.5px;height:1.2px;background:#9bbbd8"></div>
<span class="tab" style="right:66.3px;top:289px;color:#8fb2d8;font-size:9px">Export data</span>
<span class="tab" style="left:1391.8px;top:289px;color:#8fb2d8;font-size:9px">Preferences</span>
<span class="th" style="left:172.5px;top:327.7px">Sensor <svg class="srt" width="8" height="9" viewBox="0 0 8 9"><path d="M2 8.5V1M0.3 2.7L2 0.8L3.7 2.7M6 0.5V8M4.3 6.3L6 8.2L7.7 6.3" fill="none" stroke="currentColor" stroke-width="1"/></svg></span>
<span class="th" style="left:260.7px;top:327.7px">Interfaces <svg class="srt" width="8" height="9" viewBox="0 0 8 9"><path d="M2 8.5V1M0.3 2.7L2 0.8L3.7 2.7M6 0.5V8M4.3 6.3L6 8.2L7.7 6.3" fill="none" stroke="currentColor" stroke-width="1"/></svg></span>
<span class="th" style="left:341px;top:327.7px">Address <svg class="srt" width="8" height="9" viewBox="0 0 8 9"><path d="M2 8.5V1M0.3 2.7L2 0.8L3.7 2.7M6 0.5V8M4.3 6.3L6 8.2L7.7 6.3" fill="none" stroke="currentColor" stroke-width="1"/></svg></span>
<span class="th" style="left:458px;top:327.7px">Name <svg class="srt" width="8" height="9" viewBox="0 0 8 9"><path d="M2 8.5V1M0.3 2.7L2 0.8L3.7 2.7M6 0.5V8M4.3 6.3L6 8.2L7.7 6.3" fill="none" stroke="currentColor" stroke-width="1"/></svg></span>
<span class="th" style="left:548px;top:327.7px">Tags </span>
<span class="th r" style="right:711.8px;top:327.7px">Discovered <svg class="srt" width="8" height="9" viewBox="0 0 8 9"><path d="M2 8.5V1M0.3 2.7L2 0.8L3.7 2.7M6 0.5V8M4.3 6.3L6 8.2L7.7 6.3" fill="none" stroke="currentColor" stroke-width="1"/></svg></span>
<span class="th r" style="right:624px;top:327.7px">Flows <svg class="srt" width="8" height="9" viewBox="0 0 8 9"><path d="M2 8.5V1M0.3 2.7L2 0.8L3.7 2.7M6 0.5V8M4.3 6.3L6 8.2L7.7 6.3" fill="none" stroke="currentColor" stroke-width="1"/></svg></span>
<span class="th r" style="right:536px;top:327.7px">Packets <svg class="srt" width="8" height="9" viewBox="0 0 8 9"><path d="M2 8.5V1M0.3 2.7L2 0.8L3.7 2.7M6 0.5V8M4.3 6.3L6 8.2L7.7 6.3" fill="none" stroke="currentColor" stroke-width="1"/></svg></span>
<span class="th r" style="right:448px;top:327.7px">Packets Out <svg class="srt" width="8" height="9" viewBox="0 0 8 9"><path d="M2 0.5V8M0.3 6.3L2 8.2L3.7 6.3M4.5 1.5H8M4.5 4H7M4.5 6.5H6" fill="none" stroke="currentColor" stroke-width="1"/></svg></span>
<span class="th r" style="right:96px;top:316.4px;text-align:right">Data Internal [B]<br><svg class="srt" width="8" height="9" viewBox="0 0 8 9"><path d="M2 8.5V1M0.3 2.7L2 0.8L3.7 2.7M6 0.5V8M4.3 6.3L6 8.2L7.7 6.3" fill="none" stroke="currentColor" stroke-width="1"/></svg></span>
<span class="th r" style="right:8px;top:316.4px;text-align:right">Data External [B]<br><svg class="srt" width="8" height="9" viewBox="0 0 8 9"><path d="M2 8.5V1M0.3 2.7L2 0.8L3.7 2.7M6 0.5V8M4.3 6.3L6 8.2L7.7 6.3" fill="none" stroke="currentColor" stroke-width="1"/></svg></span>
<div class="hr" style="top:342.6px"></div>
<div class="hr" style="top:364.9px"></div>
<div class="hr" style="top:387.5px"></div>
<div class="hr" style="top:409.5px"></div>
<div class="hr" style="top:431.7px"></div>
<div class="hr" style="top:453.9px"></div>
<div class="hr" style="top:476.2px"></div>
<div style="left:351.5px;top:367px;width:78.5px;height:120px;background:#282828"></div>
<div style="left:456.5px;top:367px;width:79.5px;height:120px;background:#282828"></div>
<span class="td" style="left:172.5px;top:348.1px;letter-spacing:-0.42px">iSEC-HQ</span>
<span class="td" style="left:260.7px;top:348.1px">ens224</span>
<svg class="ico" style="top:350.4px;left:341px" width="9" height="9" viewBox="0 0 9 9"><circle cx="4.5" cy="4.5" r="3.9" fill="none" stroke="#e6e6e6" stroke-width="1"/><ellipse cx="4.5" cy="4.5" rx="1.8" ry="3.9" fill="none" stroke="#e6e6e6" stroke-width="0.8"/><path d="M0.6 4.5H8.4M1.2 2.6H7.8M1.2 6.4H7.8" stroke="#e6e6e6" stroke-width="0.7" fill="none"/></svg>
<span class="td" style="left:353.6px;top:347.5px;font-size:9.1px">0.0.0.0/0</span>
<span class="td" style="left:458px;top:348.1px;font-size:9.3px">All Internal</span>
<span class="td r" style="right:711.8px;top:348.1px">2022-12-16 21:32:00</span>
<span class="td r fl" style="right:624px;top:348.1px">8.08 M</span>
<span class="td r" style="right:536px;top:348.1px">388.89 M</span>
<span class="td r" style="right:448px;top:348.1px">289.09 M</span>
<span class="td r" style="right:96px;top:348.1px">101.75 G</span>
<span class="td r" style="right:8px;top:348.1px">118.34 G</span>
<span class="td" style="left:172.5px;top:370.3px;letter-spacing:-0.42px">iSEC-HQ</span>
<span class="td" style="left:260.7px;top:370.3px">ens224</span>
<svg class="ico" style="top:373.1px;left:341px" width="11" height="9" viewBox="0 0 11 9"><path d="M1.6 0.9H7.6V2.2M1.6 0.9V4.8H5.6M0.3 6.1H5.6" fill="none" stroke="#e6e6e6" stroke-width="1.2"/><rect x="6.7" y="3.2" width="3.2" height="5.2" rx="0.7" fill="none" stroke="#e6e6e6" stroke-width="1.1"/></svg>
<div class="blur" style="left:357px;top:372.8px;width:52px;height:9px;background:rgba(75,110,150,0.24)"></div>
<div class="blur" style="left:459px;top:372.8px;width:68px;height:9px;background:rgba(225,225,225,0.17)"></div>
<span class="td" style="left:548px;top:370.3px">Servers</span>
<span class="td r" style="right:711.8px;top:370.3px">2023-04-10 17:27:00</span>
<span class="td r fl" style="right:624px;top:370.3px">1.87 M</span>
<span class="td r" style="right:536px;top:370.3px">129.89 M</span>
<span class="td r" style="right:448px;top:370.3px">106.96 M</span>
<span class="td r" style="right:360px;top:370.3px">105.26 G</span>
<span class="td r" style="right:272px;top:370.3px">59.45 G</span>
<span class="td r" style="right:184px;top:370.3px">81.93 G</span>
<span class="td r" style="right:96px;top:370.3px">77.32 G</span>
<span class="td r" style="right:8px;top:370.3px">27.94 G</span>
<span class="td" style="left:172.5px;top:392.5px;letter-spacing:-0.42px">iSEC-HQ</span>
<span class="td" style="left:260.7px;top:392.5px">ens224</span>
<svg class="ico" style="top:395.3px;left:341px" width="11" height="9" viewBox="0 0 11 9"><path d="M1.6 0.9H7.6V2.2M1.6 0.9V4.8H5.6M0.3 6.1H5.6" fill="none" stroke="#e6e6e6" stroke-width="1.2"/><rect x="6.7" y="3.2" width="3.2" height="5.2" rx="0.7" fill="none" stroke="#e6e6e6" stroke-width="1.1"/></svg>
<div class="blur" style="left:357px;top:395.0px;width:55px;height:9px;background:rgba(75,110,150,0.24)"></div>
<div class="blur" style="left:459px;top:395.0px;width:46px;height:9px;background:rgba(225,225,225,0.5)"></div>
<div class="blur" style="left:503px;top:395.0px;width:30px;height:9px;background:rgba(225,225,225,0.16)"></div>
<span class="td" style="left:548px;top:392.5px">DHCP, Servers</span>
<span class="td r" style="right:711.8px;top:392.5px">2023-04-10 17:27:00</span>
<span class="td r fl" style="right:624px;top:392.5px">783.92 k</span>
<span class="td r" style="right:536px;top:392.5px">62.75 M</span>
<span class="td r" style="right:448px;top:392.5px">45.62 M</span>
<span class="td r" style="right:360px;top:392.5px">29.57 G</span>
<span class="td r" style="right:272px;top:392.5px">58.53 G</span>
<span class="td r" style="right:184px;top:392.5px">14.06 G</span>
<span class="td r" style="right:96px;top:392.5px">10.69 G</span>
<span class="td r" style="right:8px;top:392.5px">18.88 G</span>
<span class="td" style="left:172.5px;top:414.8px;letter-spacing:-0.42px">iSEC-HQ</span>
<span class="td" style="left:260.7px;top:414.8px">ens224</span>
<svg class="ico" style="top:417.6px;left:341px" width="11" height="9" viewBox="0 0 11 9"><path d="M1.6 0.9H7.6V2.2M1.6 0.9V4.8H5.6M0.3 6.1H5.6" fill="none" stroke="#e6e6e6" stroke-width="1.2"/><rect x="6.7" y="3.2" width="3.2" height="5.2" rx="0.7" fill="none" stroke="#e6e6e6" stroke-width="1.1"/></svg>
<div class="blur" style="left:357px;top:417.3px;width:39px;height:9px;background:rgba(75,110,150,0.24)"></div>
<div class="blur" style="left:459px;top:417.3px;width:35px;height:9px;background:rgba(225,225,225,0.15)"></div>
<span class="td" style="left:548px;top:414.8px">Servers</span>
<span class="td r" style="right:711.8px;top:414.8px">2022-12-16 21:32:00</span>
<span class="td r fl" style="right:624px;top:414.8px">1.82 M</span>
<span class="td r" style="right:536px;top:414.8px">40.61 M</span>
<span class="td r" style="right:448px;top:414.8px">38.51 M</span>
<span class="td r" style="right:360px;top:414.8px">29.46 G</span>
<span class="td r" style="right:272px;top:414.8px">6.19 G</span>
<span class="td r" style="right:184px;top:414.8px">27.34 G</span>
<span class="td r" style="right:96px;top:414.8px">27.0 G</span>
<span class="td r" style="right:8px;top:414.8px">2.47 G</span>
<span class="td" style="left:172.5px;top:437.0px;letter-spacing:-0.42px">iSEC-HQ</span>
<span class="td" style="left:260.7px;top:437.0px">ens224</span>
<svg class="ico" style="top:439.8px;left:341px" width="11" height="9" viewBox="0 0 11 9"><path d="M1.6 0.9H7.6V2.2M1.6 0.9V4.8H5.6M0.3 6.1H5.6" fill="none" stroke="#e6e6e6" stroke-width="1.2"/><rect x="6.7" y="3.2" width="3.2" height="5.2" rx="0.7" fill="none" stroke="#e6e6e6" stroke-width="1.1"/></svg>
<div class="blur" style="left:357px;top:439.5px;width:55px;height:9px;background:rgba(75,110,150,0.24)"></div>
<div class="blur" style="left:459px;top:439.5px;width:72px;height:9px;background:rgba(225,225,225,0.17)"></div>
<span class="td" style="left:548px;top:437.0px">DHCP, Servers</span>
<span class="td r" style="right:711.8px;top:437.0px">2023-04-10 17:27:00</span>
<span class="td r fl" style="right:624px;top:437.0px">377.12 k</span>
<span class="td r" style="right:536px;top:437.0px">26.71 M</span>
<span class="td r" style="right:448px;top:437.0px">18.18 M</span>
<span class="td r" style="right:360px;top:437.0px">14.1 G</span>
<span class="td r" style="right:272px;top:437.0px">21.54 G</span>
<span class="td r" style="right:184px;top:437.0px">6.58 G</span>
<span class="td r" style="right:96px;top:437.0px">4.78 G</span>
<span class="td r" style="right:8px;top:437.0px">9.32 G</span>
<span class="td" style="left:172.5px;top:459.3px;letter-spacing:-0.42px">iSEC-HQ</span>
<span class="td" style="left:260.7px;top:459.3px">ens224</span>
<svg class="ico" style="top:462.1px;left:341px" width="11" height="9" viewBox="0 0 11 9"><path d="M1.6 0.9H7.6V2.2M1.6 0.9V4.8H5.6M0.3 6.1H5.6" fill="none" stroke="#e6e6e6" stroke-width="1.2"/><rect x="6.7" y="3.2" width="3.2" height="5.2" rx="0.7" fill="none" stroke="#e6e6e6" stroke-width="1.1"/></svg>
<div class="blur" style="left:357px;top:461.8px;width:55px;height:9px;background:rgba(75,110,150,0.24)"></div>
<div class="blur" style="left:459px;top:461.8px;width:38px;height:9px;background:rgba(225,225,225,0.42)"></div>
<div class="blur" style="left:495px;top:461.8px;width:36px;height:9px;background:rgba(225,225,225,0.15)"></div>
<span class="td" style="left:548px;top:459.3px">DHCP, Servers</span>
<span class="td r" style="right:711.8px;top:459.3px">2023-04-10 17:27:00</span>
<span class="td r fl" style="right:624px;top:459.3px">59.0 k</span>
<span class="td r" style="right:536px;top:459.3px">25.91 M</span>
<span class="td r" style="right:448px;top:459.3px">17.45 M</span>
<span class="td r" style="right:360px;top:459.3px">25.2 G</span>
<span class="td r" style="right:272px;top:459.3px">8.52 G</span>
<span class="td r" style="right:184px;top:459.3px">17.72 G</span>
<span class="td r" style="right:96px;top:459.3px">16.32 G</span>
<span class="td r" style="right:8px;top:459.3px">8.88 G</span>
<div class="blur" style="left:357px;top:484.0px;width:55px;height:9px;background:rgba(75,110,150,0.24)"></div>
<div class="blur" style="left:459px;top:484.0px;width:50px;height:9px;background:rgba(225,225,225,0.35)"></div>
<div class="blur" style="left:507px;top:484.0px;width:24px;height:9px;background:rgba(225,225,225,0.15)"></div>

<div style="left:1049px;top:113.5px;width:40.5px;height:140px;border:2px solid #ff0000"></div>
<div class="note" style="left:392px;top:149.2px;width:168px;height:35.8px;font-size:22.7px;line-height:36.4px">データ量</div>
<svg style="left:1000px;top:245px" width="348" height="120" viewBox="0 0 348 120"><path d="M0.5 9H59.5L82.5 4.5L144 9H347V116.8H0.5Z" fill="#d5efeb"/></svg>
<div class="note" style="left:1001px;top:283.4px;width:346px;height:27px;background:none;font-size:22.5px;line-height:26.4px">特にデータ量が多い期間を特定</div>
<div class="note" style="left:1001px;top:307.1px;width:346px;height:30px;background:none;font-size:22.5px;line-height:26.4px"><span class="cjk">→</span>マウス操作で絞り込み</div>
</body></html>
